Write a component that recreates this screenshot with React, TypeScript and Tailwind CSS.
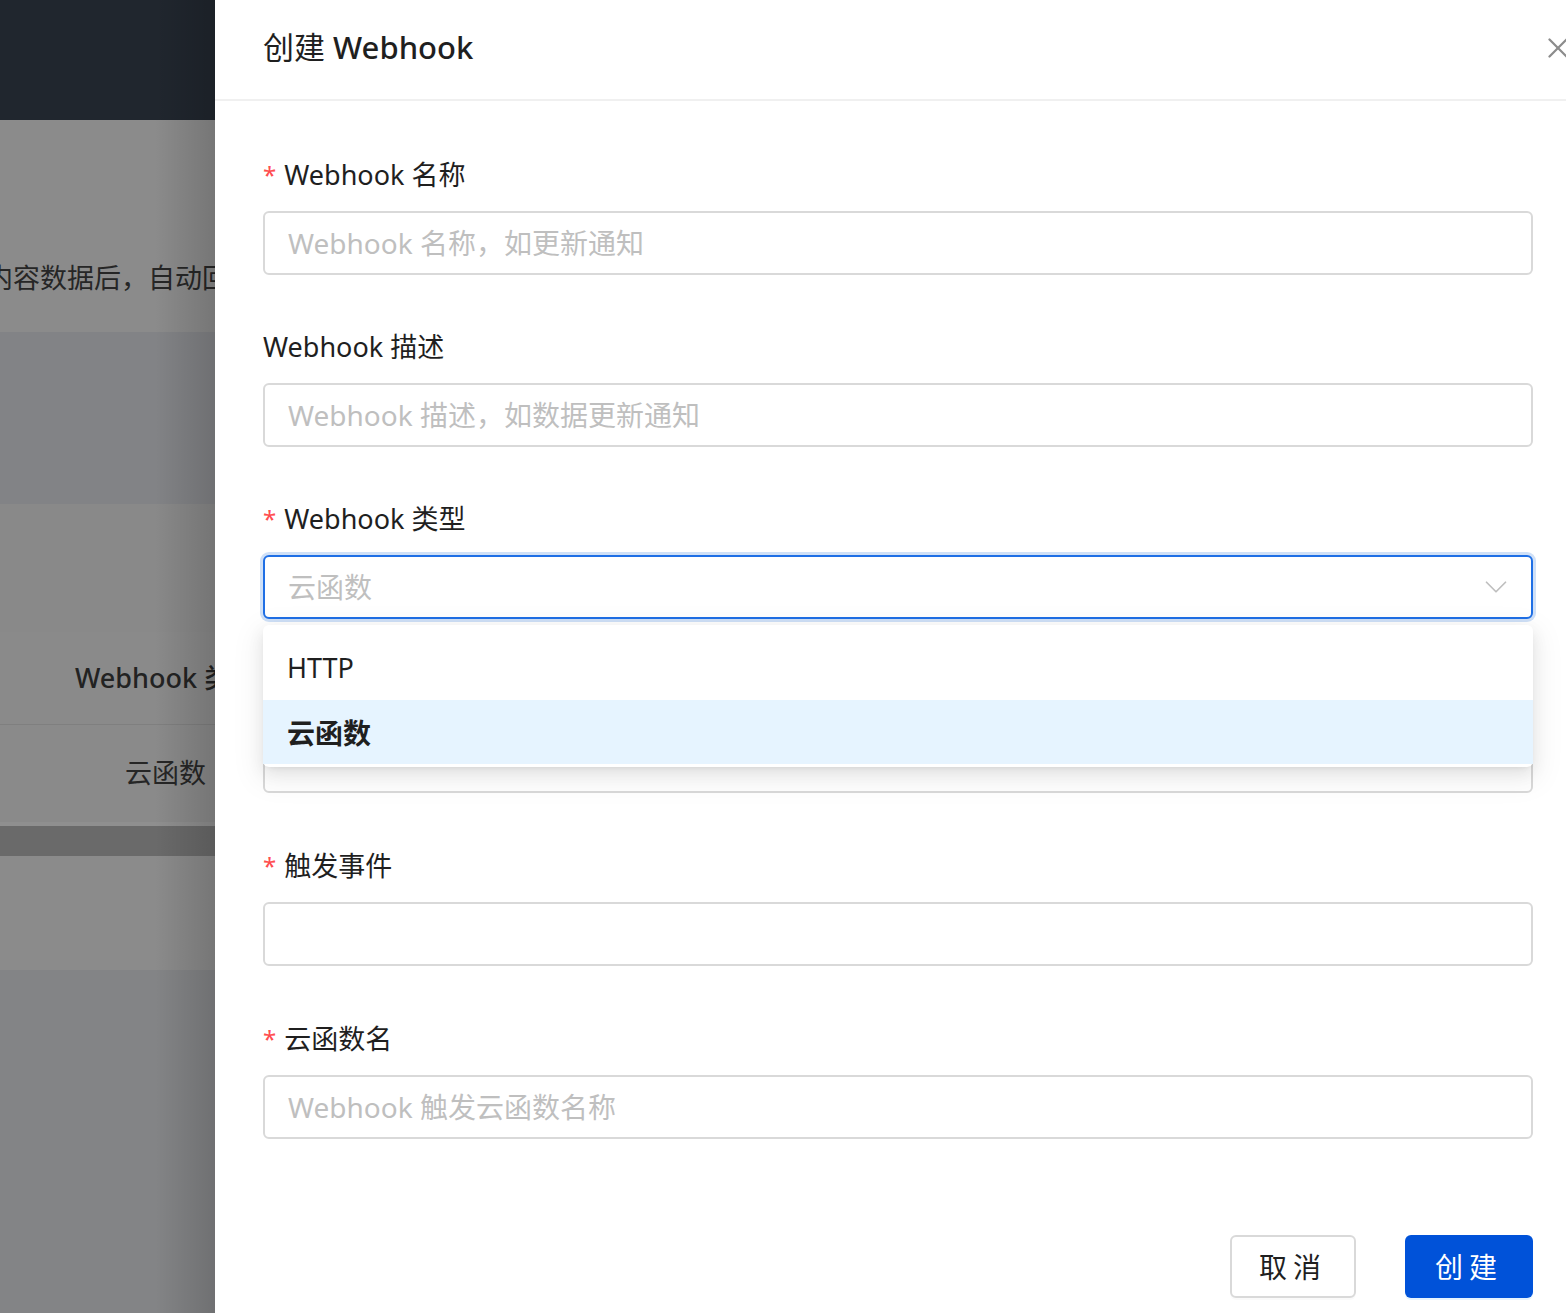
import { X, ChevronDown } from "lucide-react";

const FONT = "font-['Noto_Sans','Noto_Sans_CJK_SC',sans-serif]";

function Label({ text, required }: { text: string; required?: boolean }) {
  return (
    <div className="flex h-[44px] items-center text-[27px] text-[#1f1f1f] mb-[14px]">
      {required && <span className="mr-[8px] text-[24px] text-[#ff4d4f]">*</span>}
      {text}
    </div>
  );
}

function TextInput({ placeholder }: { placeholder?: string }) {
  return (
    <div className="flex h-[64px] items-center rounded-[6px] border-2 border-[#d9d9d9] bg-white px-[23px] text-[28px] text-[#bfbfbf]">
      {placeholder}
    </div>
  );
}

export default function App() {
  return (
    <div className={`flex h-[1313px] w-[1566px] overflow-hidden ${FONT}`}>
      {/* Masked page behind the drawer */}
      <div className="relative flex w-[215px] shrink-0 flex-col overflow-hidden">
        <div className="h-[120px] bg-[#20262e]" />
        <div className="flex h-[212px] items-start whitespace-nowrap bg-[#8b8b8b] pt-[138px] text-[27px] text-[#262626]">
          <span className="-ml-[14px]">内容数据后，自动回</span>
        </div>
        <div className="h-[172px] bg-[#828386]" />
        <div className="h-[128px] bg-[#898989]" />
        <div className="flex h-[93px] items-center whitespace-nowrap border-b border-[#7f7f7f] bg-[#8a8a8a] pl-[75px] text-[27px] font-medium text-[#222]">
          Webhook 类型
        </div>
        <div className="flex h-[97px] items-center whitespace-nowrap bg-[#8a8a8a] pl-[125px] text-[27px] text-[#262626]">
          云函数
        </div>
        <div className="h-[4px] bg-[#8f8f8f]" />
        <div className="h-[30px] bg-[#6a6a6a]" />
        <div className="h-[114px] bg-[#8b8b8b]" />
        <div className="flex-1 bg-[#838486]" />
        <div className="pointer-events-none absolute inset-y-0 right-0 w-[60px] bg-gradient-to-r from-transparent to-black/15" />
      </div>

      {/* Drawer */}
      <div className="flex w-[1366px] shrink-0 flex-col bg-white">
        <div className="flex h-[101px] shrink-0 items-center justify-between border-b-2 border-[#f0f0f0] pb-[4px] pl-[48px] pr-[6px]">
          <div className="text-[31px] text-[#1f1f1f]">
            创建 <span className="font-medium">Webhook</span>
          </div>
          <X className="h-[34px] w-[34px] text-[#8c8c8c]" strokeWidth={1.6} />
        </div>

        <div className="flex flex-1 flex-col px-[48px] pt-[52px]">
          <div className="mb-[50px]">
            <Label text="Webhook 名称" required />
            <TextInput placeholder="Webhook 名称，如更新通知" />
          </div>
          <div className="mb-[50px]">
            <Label text="Webhook 描述" />
            <TextInput placeholder="Webhook 描述，如数据更新通知" />
          </div>
          <div className="relative mb-[52px]">
            <Label text="Webhook 类型" required />
            <div className="flex h-[64px] items-center justify-between rounded-[6px] border-2 border-[#1f6fe5] bg-white pl-[23px] pr-[16px] text-[28px] text-[#bfbfbf] shadow-[0_0_0_3px_#cfe0f7]">
              云函数
              <ChevronDown className="h-[38px] w-[38px] text-[#bfbfbf]" strokeWidth={1.1} />
            </div>
            {/* Open dropdown */}
            <div className="absolute left-0 right-0 top-[128px] z-10 rounded-[6px] bg-white py-[3px] shadow-[0_6px_16px_0_rgba(0,0,0,0.08),0_3px_6px_-4px_rgba(0,0,0,0.12),0_9px_28px_8px_rgba(0,0,0,0.05)]">
              <div className="flex h-[72px] items-center px-[24px] pt-[8px] text-[27px] text-[#1f1f1f]">HTTP</div>
              <div className="flex h-[64px] items-center bg-[#e6f4ff] px-[24px] pt-[2px] text-[28px] font-bold text-[#1f1f1f]">
                云函数
              </div>
            </div>
          </div>
          <div className="mb-[51px]">
            <Label text="云函数环境" required />
            <TextInput />
          </div>
          <div className="mb-[51px]">
            <Label text="触发事件" required />
            <TextInput />
          </div>
          <div>
            <Label text="云函数名" required />
            <TextInput placeholder="Webhook 触发云函数名称" />
          </div>

          <div className="mt-auto mb-[15px] flex justify-end gap-[49px]">
            <button className="flex h-[63px] w-[126px] items-center justify-center rounded-[6px] border-2 border-[#d9d9d9] bg-white text-[28px] tracking-[6px] text-[#1f1f1f] shadow-[0_2px_0_rgba(0,0,0,0.02)]">
              取消
            </button>
            <button className="flex h-[63px] w-[128px] items-center justify-center rounded-[6px] bg-[#0052d9] text-[28px] tracking-[6px] text-white shadow-[0_2px_0_rgba(5,145,255,0.1)]">
              创建
            </button>
          </div>
        </div>
      </div>
    </div>
  );
}
